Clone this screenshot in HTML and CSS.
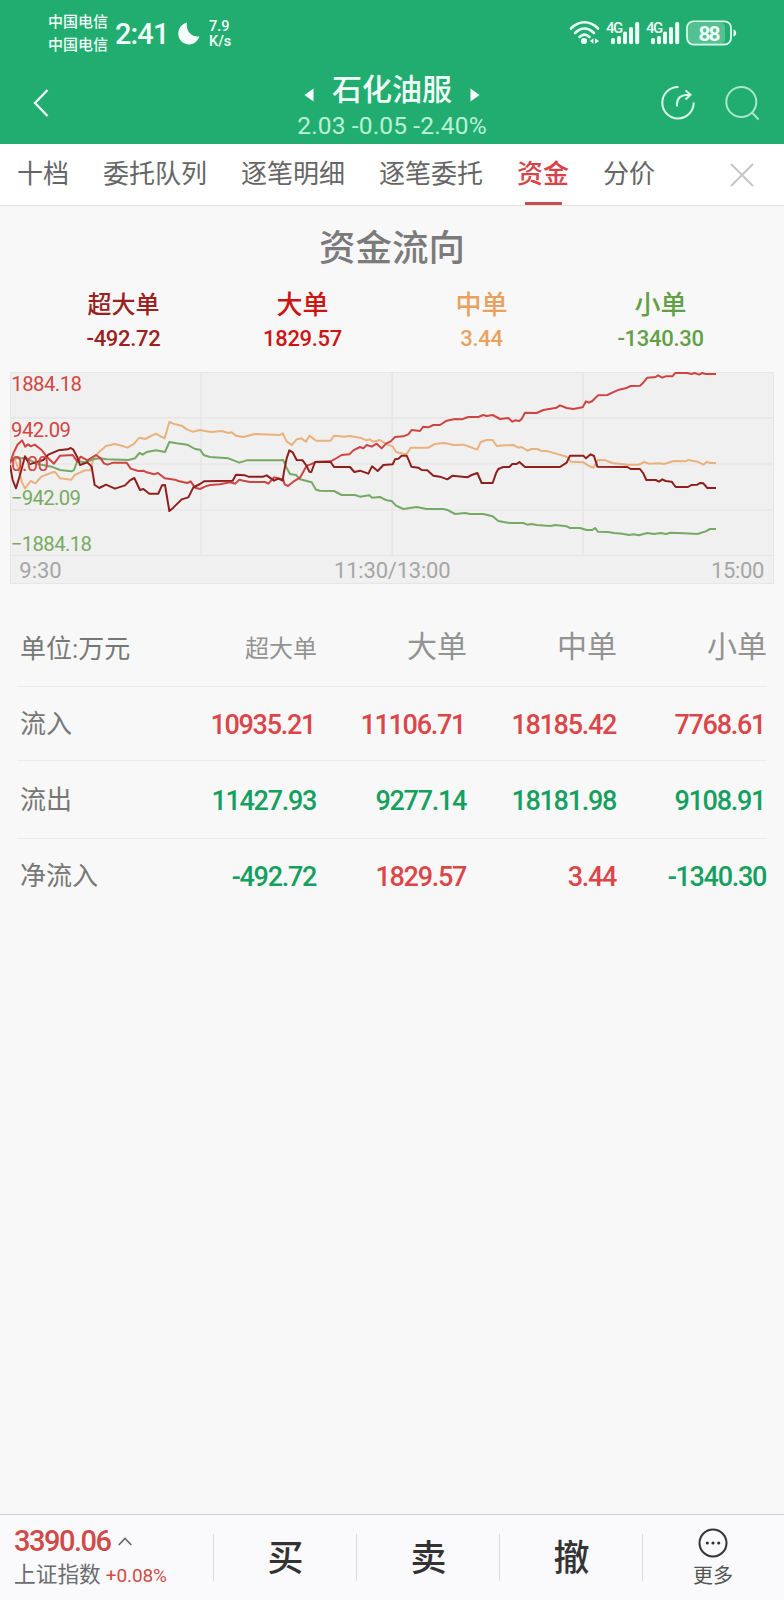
FILE: index.html
```html
<!DOCTYPE html>
<html lang="zh-CN">
	<head>
		<meta charset="UTF-8">
		<title>资金流向</title>
		<link rel="stylesheet" href="styles.css">
	</head>
	<body>
		<!-- 头部 -->
		<div class="header">
			<div class="status">
				<div class="carrier">
					<p>中国电信</p>
					<p>中国电信</p>
				</div>
				<span class="time">2:41</span>
				<svg class="moon" width="22" height="23" viewBox="0 0 22 23"><path d="M9 0.5C7.5 8.5 13 15.5 21.5 14.5C19.5 19.5 15.5 22.5 11 22.5C5 22.5 0.3 17.8 0.3 11.8C0.3 6.2 3.8 1.8 9 0.5Z" fill="#f4fffa"/></svg>
				<div class="speed">
					<p>7.9</p>
					<p>K/s</p>
				</div>
				<svg class="signal" width="172" height="28" viewBox="0 0 172 28">
					<g fill="none" stroke="#eefff7" stroke-width="2.6" stroke-linecap="round">
						<path d="M3 10.5C11 2.2 22 2.2 30 10.5"/>
						<path d="M7 15C13 9 20 9 26 15"/>
						<path d="M11.5 19C14.8 16 18.2 16 21.5 19"/>
					</g>
					<g fill="#eefff7">
						<circle cx="16" cy="23" r="3.1"/>
						<path d="M25.5 20.2V25.8L21.8 23ZM27 20.2V25.8L31 23Z"/>
						<text x="38" y="15" class="net">4G</text>
						<rect x="43" y="20" width="4" height="6.3" rx="1.8"/>
						<rect x="49" y="18" width="4" height="8.3" rx="1.8"/>
						<rect x="55" y="13.500" width="4" height="12.800" rx="1.8"/>
						<rect x="61" y="9" width="4" height="17.300" rx="1.8"/>
						<rect x="67.200" y="4" width="4" height="22.300" rx="1.8"/>
						<text x="78" y="15" class="net">4G</text>
						<rect x="83" y="20" width="4" height="6.3" rx="1.8"/>
						<rect x="89" y="18" width="4" height="8.3" rx="1.8"/>
						<rect x="95" y="13.500" width="4" height="12.800" rx="1.8"/>
						<rect x="101" y="9" width="4" height="17.300" rx="1.8"/>
						<rect x="107.200" y="4" width="4" height="22.300" rx="1.8"/>
						<rect x="120" y="5" width="37" height="20" rx="4" opacity="0.25"/>
						<rect x="119" y="3.300" width="44" height="23.200" rx="6.500" fill="none" stroke="#d8fbea" stroke-width="1.8"/>
						<path d="M165.500 11.500C169 12 169 18 165.500 18.500Z"/>
						<text x="130.500" y="22.500" class="battery" textLength="22">88</text>
					</g>
				</svg>
			</div>
			<div class="nav">
				<svg class="back" width="16" height="28" viewBox="0 0 16 28"><path d="M14.500 1L2 14L14.500 27" fill="none" stroke="#f0fff8" stroke-width="2.300"/></svg>
				<div class="stock">
					<div class="name">
						<svg width="10" height="14" viewBox="0 0 10 14"><path d="M9.500 0.500V13.500L0.500 7Z" fill="#fff"/></svg>
						<h1>石化油服</h1>
						<svg width="10" height="14" viewBox="0 0 10 14"><path d="M0.500 0.500V13.500L9.500 7Z" fill="#fff"/></svg>
					</div>
					<p class="price">2.03 -0.05 -2.40%</p>
				</div>
				<svg class="share" width="36" height="36" viewBox="0 0 36 36">
					<g fill="none" stroke="#d9f8e9" stroke-width="2">
						<path d="M18.500 2A15.700 15.700 0 1 0 33.700 17.500"/>
						<path d="M17 21.500V19C17 13 21 9.800 29 9.800M25.500 5.500L30.500 9.800L25.500 14.500"/>
					</g>
				</svg>
				<svg class="search" width="36" height="36" viewBox="0 0 36 36">
					<g fill="none" stroke="#a9e9cb" stroke-width="2">
						<circle cx="17.300" cy="17" r="15"/>
						<path d="M28 27.500L34.500 34.500"/>
					</g>
				</svg>
			</div>
		</div>

		<!-- 选项卡 -->
		<div class="tabs">
			<ul>
				<li>十档</li>
				<li>委托队列</li>
				<li>逐笔明细</li>
				<li>逐笔委托</li>
				<li class="current">资金</li>
				<li>分价</li>
			</ul>
			<svg class="close" width="24" height="24" viewBox="0 0 24 24"><path d="M1 1L23 23M23 1L1 23" stroke="#c6c6c6" stroke-width="2"/></svg>
		</div>

		<h2 class="title">资金流向</h2>

		<div class="legend">
			<div class="super"><p class="small">超大单</p><p class="num">-492.72</p></div>
			<div class="big"><p>大单</p><p class="num">1829.57</p></div>
			<div class="middle"><p>中单</p><p class="num">3.44</p></div>
			<div class="little"><p>小单</p><p class="num">-1340.30</p></div>
		</div>

		<!-- 分时曲线，坐标为3倍 -->
		<svg class="chart" width="764" height="212" viewBox="30 21 2292 636">
			<rect x="31.500" y="22.500" width="2289" height="633" fill="#f0f0f0" stroke="#e6e6e6" stroke-width="3"/>
			<g stroke="#e7e7e7" stroke-width="5">
				<path d="M30 158.500H2320M30 297H2320M30 435H2320"/>
				<path d="M603.500 22V571M1176.500 22V571M1749.500 22V571"/>
				<path d="M30 571.500H2320" stroke-width="3"/>
			</g>
			<g class="lines">
				<polyline stroke="#e9b17c" points="30,285 45,285 55,310 66,352 75,370 92,348 106,355 124,335 160,321 166,322 180,340 214,344 224,330 240,323 255,316 272,316 280,280 295,263 318,243 345,237 368,243 382,248 400,238 418,218 435,222 468,206 482,214 494,220 508,171 520,176 545,182 562,194 578,200 600,195 620,199 635,201 665,198 685,204 695,202 708,212 730,216 765,207 840,210 848,205 860,229 875,240 890,223 904,220 918,230 928,212 948,227 992,227 1002,212 1015,213 1032,215 1050,213 1080,218 1100,226 1108,223 1120,230 1140,225 1160,238 1178,244 1188,261 1210,266 1220,267 1232,248 1285,248 1305,237 1330,234 1346,236 1358,240 1390,239 1410,246 1432,254 1442,231 1460,225 1478,225 1490,243 1515,241 1540,240 1555,248 1565,246 1582,257 1595,252 1612,252 1622,257 1645,259 1665,265 1700,275 1712,290 1750,292 1767,303 1780,308 1794,285 1817,286 1837,294 1882,299 1917,299 1932,291 1947,296 1977,295 1992,297 2022,288 2057,289 2064,285 2092,290 2110,299 2120,291 2132,294 2148,294"/>
				<polyline stroke="#76a965" points="30,290 45,280 80,280 110,296 155,305 180,315 215,319 222,315 232,288 255,292 280,283 300,280 320,283 385,285 405,280 418,264 428,269 440,261 468,256 495,261 508,231 530,235 562,239 585,252 600,254 612,271 630,276 685,280 718,293 740,286 760,286 840,286 850,285 858,305 870,327 888,330 900,343 935,352 948,374 960,377 1002,378 1025,390 1065,390 1080,395 1108,391 1116,398 1140,396 1160,406 1175,408 1188,422 1210,432 1250,426 1280,432 1330,432 1345,436 1365,447 1395,444 1410,447 1450,447 1478,454 1495,468 1515,472 1530,474 1570,474 1582,479 1595,477 1610,480 1652,483 1665,480 1700,484 1710,489 1740,489 1760,495 1777,495 1785,489 1794,500 1824,501 1842,504 1867,506 1887,510 1900,508 1917,511 1942,504 1962,507 1982,504 1997,507 2012,503 2052,505 2092,507 2117,499 2130,492 2148,492"/>
				<polyline stroke="#cf4343" points="30,295 40,265 52,240 66,226 76,245 84,238 92,244 104,239 125,255 140,275 162,296 180,272 218,270 232,290 242,275 262,286 288,270 302,280 312,295 322,299 340,293 380,293 392,311 415,318 430,317 440,322 462,328 474,324 494,340 525,344 535,348 562,354 572,349 585,368 600,372 615,365 630,360 660,358 690,352 706,356 718,344 730,347 750,351 795,351 805,356 822,337 840,341 850,345 854,358 864,363 880,350 900,338 910,320 920,302 930,299 950,290 992,289 1010,279 1025,270 1048,268 1060,256 1080,246 1090,250 1100,240 1115,245 1130,236 1145,250 1158,236 1172,229 1185,216 1210,214 1225,208 1235,195 1260,198 1270,185 1285,187 1300,180 1320,180 1340,167 1365,162 1385,163 1405,156 1435,156 1450,150 1460,153 1478,150 1500,162 1525,159 1537,170 1545,166 1558,168 1565,162 1575,143 1610,144 1630,135 1670,128 1680,121 1700,129 1720,132 1748,127 1758,109 1767,113 1777,108 1794,91 1822,90 1837,83 1857,74 1877,70 1892,63 1920,62 1928,55 1942,38 1967,36 1974,31 1987,38 1997,34 2017,34 2027,23 2062,24 2074,27 2084,24 2097,29 2107,24 2117,27 2148,27"/>
				<polyline stroke="#8f1f1d" points="30,300 38,345 48,370 60,330 75,274 88,298 130,285 145,269 175,256 203,253 212,249 220,254 232,277 240,300 262,292 275,305 284,360 298,369 318,359 345,371 375,361 390,346 403,339 420,375 430,372 448,386 475,386 486,361 495,360 508,438 520,428 545,403 565,397 580,367 600,357 612,349 698,347 708,329 735,331 745,335 790,335 800,331 822,347 835,341 848,347 852,320 860,280 868,256 878,262 890,285 908,286 920,303 928,320 934,321 945,291 992,291 1002,306 1050,306 1063,321 1080,317 1105,326 1116,304 1133,318 1150,300 1178,298 1185,283 1195,281 1205,272 1220,272 1228,290 1234,305 1255,308 1265,315 1282,316 1300,332 1320,335 1342,343 1358,332 1402,337 1415,330 1432,324 1445,354 1478,354 1488,325 1495,312 1510,306 1528,306 1537,297 1550,297 1558,291 1575,306 1680,306 1700,293 1710,272 1750,272 1758,280 1772,268 1782,273 1792,305 1882,306 1892,312 1920,312 1930,325 1939,345 1967,345 1977,350 1987,343 1997,348 2015,350 2027,366 2064,366 2074,360 2092,359 2100,354 2110,355 2122,369 2148,369"/>
			</g>
			<g class="axis">
				<text class="up" x="34" y="78" textLength="212">1884.18</text>
				<text class="up" x="33" y="216" textLength="180">942.09</text>
				<text class="up" x="33" y="318" textLength="114">0.00</text>
				<text class="down" x="32" y="420" textLength="211">−942.09</text>
				<text class="down" x="32" y="558" textLength="244">−1884.18</text>
			</g>
			<g class="clock">
				<text x="58" y="639" textLength="127">9:30</text>
				<text x="1002" y="639" textLength="350">11:30/13:00</text>
				<text x="2133" y="639" textLength="160">15:00</text>
			</g>
		</svg>

		<!-- 明细表 -->
		<div class="table">
			<div class="row head">
				<span>单位:万元</span><span class="small">超大单</span><span>大单</span><span>中单</span><span>小单</span>
			</div>
			<div class="row in">
				<span>流入</span><b class="red one">10935.21</b><b class="red one">11106.71</b><b class="red">18185.42</b><b class="red one">7768.61</b>
			</div>
			<div class="row out">
				<span>流出</span><b class="green">11427.93</b><b class="green">9277.14</b><b class="green">18181.98</b><b class="green one">9108.91</b>
			</div>
			<div class="row net-in">
				<span>净流入</span><b class="green">-492.72</b><b class="red">1829.57</b><b class="red">3.44</b><b class="green">-1340.30</b>
			</div>
		</div>

		<!-- 底部 -->
		<div class="footer">
			<div class="index">
				<p class="point">3390.06<svg width="14" height="9" viewBox="0 0 14 9"><path d="M0.700 8L7 1.500L13.300 8" fill="none" stroke="#666" stroke-width="1.600"/></svg></p>
				<p class="shzs">上证指数<span>+0.08%</span></p>
			</div>
			<div class="btn">买</div>
			<div class="btn">卖</div>
			<div class="btn">撤</div>
			<div class="more">
				<svg width="30" height="30" viewBox="0 0 30 30">
					<circle cx="15" cy="15" r="13.500" fill="none" stroke="#333" stroke-width="2"/>
					<g fill="#333"><circle cx="9.300" cy="15" r="1.600"/><circle cx="15" cy="15" r="1.600"/><circle cx="20.700" cy="15" r="1.600"/></g>
				</svg>
				<p>更多</p>
			</div>
		</div>
	</body>
</html>
```
FILE: styles.css
```css
*{
	padding: 0;
	margin: 0;
	box-sizing: border-box;
}
body {
	width: 784px;
	height: 1600px;
	display: flex;
	flex-direction: column;
	background: #f8f8f8;
	font-family: Roboto, "Noto Sans CJK SC", sans-serif;
	color: #777;
	overflow: hidden;
}
ul {
	list-style: none;
}
svg {
	display: block;
	flex: none;
}

/*头部*/
.header {
	height: 144px;
	background: #22ad70;
	color: #f2fff9;
}
.status {
	height: 68px;
	display: flex;
	align-items: flex-start;
	padding-left: 48px;
}
.carrier {
	width: 60px;
	padding-top: 9px;
	font: 500 15px/23px "Noto Sans CJK SC", sans-serif;
	white-space: nowrap;
}
.time {
	width: 60px;
	margin: 16px 0 0 7px;
	font-size: 29px;
	font-weight: 500;
	line-height: 36px;
	letter-spacing: -0.9px;
}
.moon {
	margin: 22px 0 0 3px;
}
.speed {
	margin: 19px 0 0 9px;
	font-size: 14.5px;
	font-weight: 500;
	line-height: 15px;
}
.signal {
	margin: 18px 0 0 auto;
	margin-right: 44px;
}
.net {
	font-size: 15px;
	font-weight: 500;
	letter-spacing: -1.5px;
}
.battery {
	font-size: 21px;
	font-weight: 700;
}
.nav {
	height: 76px;
	display: flex;
	align-items: flex-start;
}
.back {
	margin: 21px 0 0 33px;
}
.stock {
	width: 200px;
	margin-left: 243px;
}
.name {
	display: flex;
	justify-content: center;
	align-items: center;
	gap: 18px;
}
.name svg {
	margin-top: 9px;
}
h1 {
	font-size: 30px;
	font-weight: 500;
	line-height: 44px;
}
.price {
	font-size: 24.5px;
	line-height: 27px;
	letter-spacing: 0.15px;
	text-align: center;
	color: #b9f1d6;
	white-space: nowrap;
}
.share {
	margin: 17px 0 0 168px;
}
.search {
	margin: 17px 0 0 28px;
}

/*选项卡*/
.tabs {
	height: 62px;
	display: flex;
	background: #fff;
	border-bottom: 1px solid #e4e4e4;
	padding-left: 17px;
}
.tabs ul {
	display: flex;
	gap: 34px;
}
.tabs li {
	height: 61px;
	font-size: 26px;
	line-height: 60px;
	color: #666;
}
.tabs .current {
	color: #d8434a;
	font-weight: 500;
	background: linear-gradient(#cb4d50, #cb4d50) 8px 100% / 37px 3px no-repeat;
}
.close {
	margin: 19px 0 0 75px;
}

/*标题*/
.title {
	height: 74px;
	font-size: 36.5px;
	font-weight: 500;
	line-height: 85px;
	text-align: center;
	color: #7b7b7b;
}
.legend {
	height: 92px;
	display: grid;
	grid-template-columns: repeat(4, 179px);
	padding-left: 34px;
	text-align: center;
	font-size: 26px;
	font-weight: 500;
	line-height: 50px;
}
.legend p {
	height: 41px;
}
.legend .small {
	font-size: 24px;
}
.legend .num {
	height: auto;
	font-size: 22px;
	line-height: 36px;
	letter-spacing: -0.3px;
}
.super {
	color: #9b211e;
}
.big {
	color: #cc1512;
}
.middle {
	color: #eaa160;
}
.little {
	color: #61a046;
}

/*曲线图*/
.chart {
	margin-left: 10px;
}
.lines {
	fill: none;
	stroke-width: 6;
	stroke-linejoin: round;
}
.axis {
	font-size: 61px;
}
.up {
	fill: #d24644;
}
.down {
	fill: #76ab62;
}
.clock {
	font-size: 66px;
	fill: #a6a6a6;
}

/*明细表*/
.table {
	margin: 26px 17px 0;
}
.row {
	display: grid;
	grid-template-columns: repeat(5, 150px);
	font-size: 26px;
	text-align: right;
	border-bottom: 1px solid #ebebeb;
}
.row span:first-child {
	text-align: left;
	padding-left: 3px;
	font-size: 26px;
	color: #777;
}
.row b {
	padding-top: 1px;
	padding-right: 1px;
	font-size: 27px;
	font-weight: 500;
	letter-spacing: -1.3px;
}
.head {
	height: 77px;
	font-size: 30px;
	line-height: 74px;
	color: #939393;
}
.head span:first-child, .head .small {
	line-height: 79px;
}
.head .small {
	font-size: 24px;
}
.in {
	height: 74px;
	line-height: 74px;
}
.out {
	height: 78px;
	line-height: 78px;
}
.net-in {
	height: 76px;
	line-height: 75px;
	border-bottom: 0;
}
.row .one {
	padding-right: 2px;
}
.red {
	color: #dc4649;
}
.green {
	color: #16a060;
}

/*底部*/
.footer {
	height: 86px;
	margin-top: auto;
	display: grid;
	grid-template-columns: 214px 143px 143px 143px 141px;
	background: #fafafc;
	border-top: 1px solid #cfcfcf;
}
.index {
	padding: 9px 0 0 14px;
}
.point {
	display: flex;
	align-items: center;
	gap: 8px;
	font-size: 29px;
	font-weight: 500;
	line-height: 34px;
	letter-spacing: -1.5px;
	color: #d04a48;
}
.shzs {
	font-size: 21.7px;
	line-height: 34px;
	color: #6b6b72;
	white-space: nowrap;
}
.shzs span {
	margin-left: 5px;
	font-size: 19px;
	letter-spacing: -0.1px;
	color: #d04a48;
}
.index, .btn {
	background: linear-gradient(#dcdcdf, #dcdcdf) 100% 19px / 1px 47px no-repeat;
}
.btn {
	font-size: 36px;
	font-weight: 500;
	line-height: 89px;
	text-align: center;
	color: #333;
}
.more {
	display: flex;
	flex-direction: column;
	align-items: center;
	padding: 13px 1px 0 0;
	font-size: 20px;
	line-height: 37px;
	color: #555;
}
```
